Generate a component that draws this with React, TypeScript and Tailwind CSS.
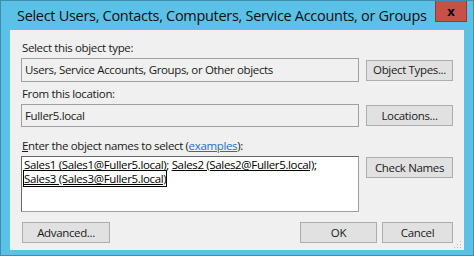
import React from "react"

const font = { fontFamily: '"Open Sans", "Noto Sans", sans-serif' }

function Btn({ label, className = "" }: { label: React.ReactNode; className?: string }) {
  return (
    <div
      className={
        "h-[21px] flex items-center justify-center bg-[#e1e1e1] border border-[#adadad] text-[11.5px] tracking-[-0.35px] text-[#1a1a1a] " +
        className
      }
    >
      {label}
    </div>
  )
}

export default function App() {
  return (
    <div className="w-[474px] h-[256px] bg-[#5cc1e6] border border-[#3d8fae] flex flex-col" style={font}>
      <div className="h-[29px] flex items-start shrink-0">
        <div className="pl-[16px] pt-[4px] text-[14.5px] text-[#101010] tracking-[-0.3px] flex-1 whitespace-nowrap">
          Select Users, Contacts, Computers, Service Accounts, or Groups
        </div>
        <div className="w-[32px] h-[21px] mr-[6px] bg-[#c9504a] border border-[#8f3a35] border-t-0 flex items-center justify-center text-[13px] font-bold text-black leading-none shrink-0">
          x
        </div>
      </div>

      <div className="mx-[9px] h-[220px] bg-[#f0f0f0] px-[11px] text-[11.5px] tracking-[-0.35px] text-[#1a1a1a] flex flex-col">
        <div className="mt-[10px] h-[15px] leading-[15px] pl-[1px]">Select this object type:</div>
        <div className="mt-[3px] flex items-center">
          <div className="w-[338px] h-[24px] border border-[#a0a0a0] bg-[#f0f0f0] flex items-center pl-[3px]">
            Users, Service Accounts, Groups, or Other objects
          </div>
          <Btn label="Object Types..." className="ml-[7px] w-[87px]" />
        </div>

        <div className="mt-[4px] h-[15px] leading-[15px] pl-[1px]">From this location:</div>
        <div className="mt-[3px] flex items-center">
          <div className="w-[338px] h-[23px] border border-[#a0a0a0] bg-[#f0f0f0] flex items-center pl-[3px]">
            Fuller5.local
          </div>
          <Btn label="Locations..." className="ml-[7px] w-[87px]" />
        </div>

        <div className="mt-[11px] h-[15px] leading-[15px] pl-[1px]">
          <span className="underline">E</span>nter the object names to select (
          <span className="text-[#2a6cc4] underline">examples</span>):
        </div>
        <div className="mt-[3px] flex items-start">
          <div className="w-[338px] h-[56px] border border-[#a0a0a0] border-l-[#696969] border-t-[#696969] bg-white pl-[2px] pt-[1px] leading-[14px] text-black">
            <div>
              <span className="underline">Sales1 (Sales1@Fuller5.local)</span>;{" "}
              <span className="underline">Sales2 (Sales2@Fuller5.local)</span>;
            </div>
            <div>
              <span className="underline outline outline-1 outline-black">Sales3 (Sales3@Fuller5.local)</span>
            </div>
          </div>
          <Btn label="Check Names" className="ml-[7px] mt-[1px] w-[87px]" />
        </div>

        <div className="mt-[10px] flex items-center">
          <Btn label="Advanced..." className="ml-[1px] w-[88px]" />
          <div className="flex-1" />
          <Btn label="OK" className="w-[77px] border-[#4a8fd0]" />
          <Btn label="Cancel" className="ml-[5px] w-[71px]" />
        </div>
        <div className="flex justify-end mt-[-2px] mr-[-9px]">
          <svg width="8" height="8" viewBox="0 0 8 8">
            <g fill="#b8b8b8">
              <rect x="6" y="0" width="1" height="1" />
              <rect x="3" y="3" width="1" height="1" />
              <rect x="6" y="3" width="1" height="1" />
              <rect x="0" y="6" width="1" height="1" />
              <rect x="3" y="6" width="1" height="1" />
              <rect x="6" y="6" width="1" height="1" />
            </g>
          </svg>
        </div>
      </div>
    </div>
  )
}
